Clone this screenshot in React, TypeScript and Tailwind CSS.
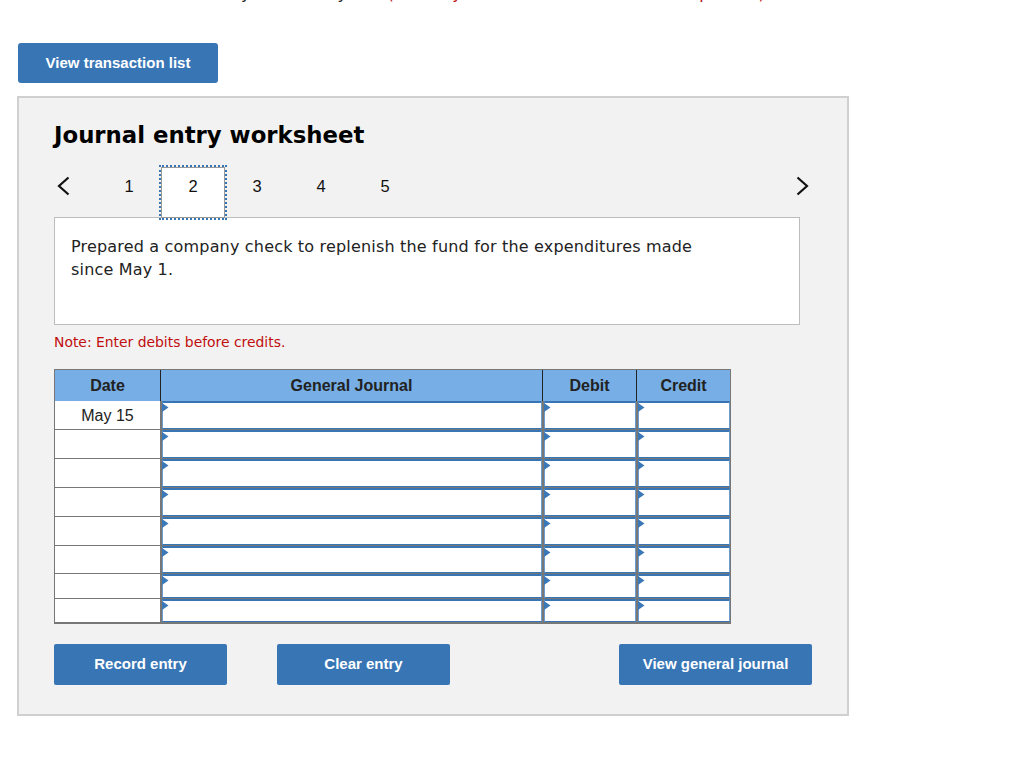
const sans = 'font-["Liberation_Sans",Arial,sans-serif]';
const verdana = 'font-["DejaVu_Sans",Verdana,sans-serif]';

const rowHeights = [29, 29, 29, 29, 29, 28, 25, 24];
const tableCols = 'grid grid-cols-[105px_382px_94px_94px]';

function Flag() {
  return (
    <svg className="absolute -left-px top-0" width="7" height="9" viewBox="0 0 7 9">
      <path d="M0 0 L6.5 4.5 L0 9 Z" fill="#3b78b8" />
    </svg>
  );
}

function Cell() {
  return (
    <div className="relative mb-px ml-[2px] border-x border-t-2 border-b border-x-[#6d9dd0] border-y-[#3775b5] bg-white">
      <Flag />
    </div>
  );
}

function ActionButton({ label, className }: { label: string; className: string }) {
  return (
    <button className={`h-[41px] rounded-[2px] bg-[#3775b5] text-[15px] font-bold text-white ${className}`}>
      {label}
    </button>
  );
}

export default function App() {
  return (
    <div className={`h-[782px] w-[1024px] overflow-hidden bg-white ${sans}`}>
      <div className="h-[43px] overflow-hidden">
        <p className={`-mt-[16px] whitespace-nowrap pl-[18px] text-[16px] leading-[20px] tracking-[0.8px] text-[#222] ${verdana}`}>
          Record the entries for May 1 and May 15. <span className="tracking-[0.4px] text-[#c00d0d]">(Round your answers to two decimal places.)</span>
        </p>
      </div>

      <button className="ml-[18px] h-[40px] w-[200px] rounded-[3px] bg-[#3775b5] pt-px text-[15px] font-bold text-white">
        View transaction list
      </button>

      <div className="ml-[17px] mt-[13px] h-[620px] w-[832px] border-2 border-[#d0d0d0] bg-[#f2f2f2] pl-[35px] pt-[23px]">
        <h1 className={`text-[22.8px] leading-[28px] font-bold text-black ${verdana}`}>Journal entry worksheet</h1>

        <div className="mt-[16px] flex h-[52px] w-[756px] items-start">
          <svg className="ml-[2px] mt-[11px]" width="14" height="20" viewBox="0 0 14 20" fill="none">
            <path d="M12.5 1.5 L3 10 L12.5 18.5" stroke="#111" strokeWidth="2.2" />
          </svg>
          <div className="ml-[27px] flex text-[16.5px] text-[#111]">
            <span className="flex h-[42px] w-[64px] items-center justify-center pt-px">1</span>
            <span className="relative z-10 mt-[2px] flex h-[51px] w-[64px] items-center justify-center border border-[#999] bg-white pb-[12px] outline-2 outline-[#3775b5] outline-dotted">2</span>
            <span className="flex h-[42px] w-[64px] items-center justify-center pt-px">3</span>
            <span className="flex h-[42px] w-[64px] items-center justify-center pt-px">4</span>
            <span className="flex h-[42px] w-[64px] items-center justify-center pt-px">5</span>
          </div>
          <svg className="ml-auto mt-[11px]" width="14" height="20" viewBox="0 0 14 20" fill="none">
            <path d="M1.5 1.5 L11 10 L1.5 18.5" stroke="#111" strokeWidth="2.2" />
          </svg>
        </div>

        <div className={`h-[108px] w-[746px] border border-[#bdbdbd] bg-white pl-[16px] pt-[17px] text-[16px] leading-[23px] tracking-[0.18px] text-[#222] ${verdana}`}>
          Prepared a company check to replenish the fund for the expenditures made<br />since May 1.
        </div>

        <p className={`mt-[8px] text-[13.9px] leading-[18px] text-[#c00d0d] ${verdana}`}>Note: Enter debits before credits.</p>

        <div className="mt-[18px] w-[677px] border border-[#777] bg-[#777]">
          <div className={`${tableCols} h-[31px] bg-[#76aee5] text-[16px] font-bold text-[#222]`}>
            <div className="flex items-center justify-center">Date</div>
            <div className="flex items-center justify-center border-l border-[#222]">General Journal</div>
            <div className="flex items-center justify-center border-l border-[#222]">Debit</div>
            <div className="flex items-center justify-center border-l border-[#222]">Credit</div>
          </div>
          {rowHeights.map((h, i) => (
            <div key={i} className={tableCols} style={{ height: h }}>
              <div className="flex items-center justify-center border-b border-[#777] bg-white pt-px text-[16px] text-[#222]">
                {i === 0 ? 'May 15' : ''}
              </div>
              <Cell />
              <Cell />
              <Cell />
            </div>
          ))}
        </div>

        <div className="mt-[20px] flex w-[758px]">
          <ActionButton label="Record entry" className="w-[173px]" />
          <ActionButton label="Clear entry" className="ml-[50px] w-[173px]" />
          <ActionButton label="View general journal" className="ml-auto w-[193px]" />
        </div>
      </div>
    </div>
  );
}
